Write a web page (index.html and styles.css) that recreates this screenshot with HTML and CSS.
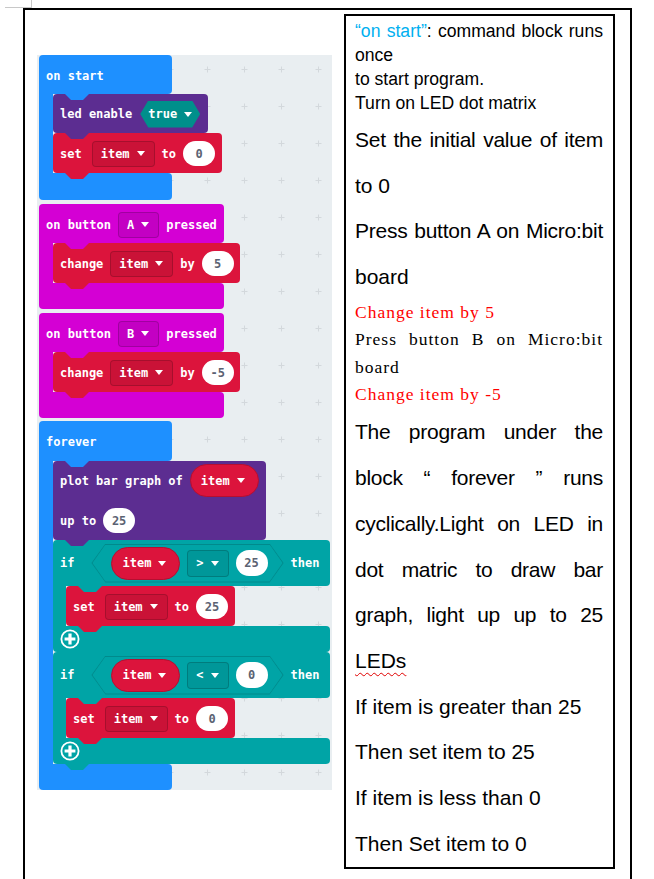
FILE: index.html
```html
<!DOCTYPE html>
<html lang="en">
<head>
<meta charset="utf-8">
<title>micro:bit bar graph</title>
<link rel="stylesheet" href="styles.css">
</head>
<body>
<div class="mark"></div>
<div class="sheet">
  <div class="left">
    <div class="canvas">
      <svg class="grid" width="295" height="735" viewBox="0 0 295 735">
        <defs>
          <pattern id="plus" x="4" y="-4" width="37" height="37" patternUnits="userSpaceOnUse">
            <path d="M15.5 18.5H21.5M18.5 15.5V21.5" stroke="#d3d8dc" stroke-width="1" fill="none"/>
          </pattern>
        </defs>
        <rect width="295" height="735" fill="url(#plus)"/>
      </svg>

      <div class="cblk blue start">
        <div class="head"><span>on start</span></div>
        <div class="body"><div class="arm"></div><div class="stmts">
          <div class="blk purple row led stmt"><span>led enable</span><span class="hex">true<i class="arr"></i></span></div>
          <div class="blk red row set stmt"><span class="lbl-set">set</span><span class="dd">item<i class="arr"></i></span><span>to</span><span class="num">0</span></div>
        </div></div>
        <div class="foot"></div>
      </div>

      <div class="cblk magenta btn">
        <div class="head"><span>on button</span><span class="dd">A<i class="arr"></i></span><span>pressed</span></div>
        <div class="body"><div class="arm"></div><div class="stmts">
          <div class="blk red row change stmt"><span>change</span><span class="dd">item<i class="arr"></i></span><span>by</span><span class="num">5</span></div>
        </div></div>
        <div class="foot"></div>
      </div>

      <div class="cblk magenta btn btn2">
        <div class="head"><span>on button</span><span class="dd">B<i class="arr"></i></span><span>pressed</span></div>
        <div class="body"><div class="arm"></div><div class="stmts">
          <div class="blk red row change stmt"><span>change</span><span class="dd">item<i class="arr"></i></span><span>by</span><span class="num">-5</span></div>
        </div></div>
        <div class="foot"></div>
      </div>

      <div class="cblk blue forever">
        <div class="head"><span>forever</span></div>
        <div class="body"><div class="arm"></div><div class="stmts">
          <div class="blk purple plot stmt">
            <div class="prow r1"><span>plot bar graph of</span><span class="var">item<i class="arr"></i></span></div>
            <div class="prow r2"><span>up to</span><span class="num">25</span></div>
          </div>

          <div class="cblk teal if stmt">
            <div class="head"><span class="kw-if">if</span><span class="cond"><span class="cond-in"><span class="var">item<i class="arr"></i></span><span class="dd op">&gt;<i class="arr"></i></span><span class="num">25</span></span></span><span>then</span></div>
            <div class="body"><div class="arm"></div><div class="stmts">
              <div class="blk red row set stmt"><span class="lbl-set">set</span><span class="dd">item<i class="arr"></i></span><span>to</span><span class="num">25</span></div>
            </div></div>
            <div class="foot"><svg class="add" width="20" height="20" viewBox="0 0 20 20"><circle cx="10" cy="10" r="8.6" fill="none" stroke="#fff" stroke-width="1.8"/><path d="M10 4.6V15.4M4.6 10H15.4" stroke="#fff" stroke-width="3.2"/></svg></div>
          </div>

          <div class="cblk teal if stmt">
            <div class="head"><span class="kw-if">if</span><span class="cond"><span class="cond-in"><span class="var">item<i class="arr"></i></span><span class="dd op">&lt;<i class="arr"></i></span><span class="num">0</span></span></span><span>then</span></div>
            <div class="body"><div class="arm"></div><div class="stmts">
              <div class="blk red row set stmt"><span class="lbl-set">set</span><span class="dd">item<i class="arr"></i></span><span>to</span><span class="num">0</span></div>
            </div></div>
            <div class="foot"><svg class="add" width="20" height="20" viewBox="0 0 20 20"><circle cx="10" cy="10" r="8.6" fill="none" stroke="#fff" stroke-width="1.8"/><path d="M10 4.6V15.4M4.6 10H15.4" stroke="#fff" stroke-width="3.2"/></svg></div>
          </div>
        </div></div>
        <div class="foot"></div>
      </div>
    </div>
  </div>

  <div class="right">
    <div class="s j"><span class="blu">“on start”</span>: command block runs</div>
    <div class="s">once</div>
    <div class="s">to start program.</div>
    <div class="s">Turn on LED dot matrix</div>
    <div class="b j g1">Set the initial value of item</div>
    <div class="b">to 0</div>
    <div class="b j">Press button A on Micro:bit</div>
    <div class="b">board</div>
    <div class="m red-t">Change item by 5</div>
    <div class="m j">Press button B on Micro:bit</div>
    <div class="m">board</div>
    <div class="m red-t">Change item by -5</div>
    <div class="c j g2">The program under the</div>
    <div class="c j">block “ forever ” runs</div>
    <div class="c j">cyclically.Light on LED in</div>
    <div class="c j">dot matric to draw bar</div>
    <div class="c j">graph, light up up to 25</div>
    <div class="c"><span class="spell">LEDs</span></div>
    <div class="c">If item is greater than 25</div>
    <div class="c">Then set item to 25</div>
    <div class="c">If item is less than 0</div>
    <div class="c">Then Set item to 0</div>
  </div>
</div>
</body>
</html>
```

FILE: styles.css
```css
* { box-sizing: border-box; }

body {
  margin: 0;
  background: #fff;
}

.mark {
  width: 27px;
  height: 8px;
  margin-left: 5px;
  border-right: 1px solid #c8c8c8;
  border-bottom: 1px solid #c8c8c8;
}

.sheet {
  display: flex;
  align-items: flex-start;
  margin-left: 23px;
  width: 609px;
  height: 871px;
  border: 2px solid #000;
  border-bottom: 0;
}

.left {
  padding: 45px 0 0 12px;
}

/* ---------- block canvas ---------- */
.canvas {
  position: relative;
  width: 295px;
  height: 735px;
  padding-left: 2px;
  background: #e9eef1;
  font: bold 12px "DejaVu Sans Mono", monospace;
  color: #fff;
  white-space: nowrap;
}

.grid {
  position: absolute;
  left: 0;
  top: 0;
}

.blue { --c: #1e90ff; }
.purple { --c: #5c2d91; }
.red { --c: #dc143c; }
.magenta { --c: #d400d4; }
.teal { --c: #00a4a6; }

.cblk {
  position: relative;
  display: flex;
  flex-direction: column;
  align-items: flex-start;
}

.head {
  display: flex;
  align-items: center;
  gap: 7px;
  padding: 2px 7px 0;
  background: var(--c);
  border-radius: 4px 4px 4px 0;
}

.body { display: flex; }

.arm {
  flex: none;
  width: 14px;
  background: var(--c);
}

.stmts {
  position: relative;
  display: flex;
  flex-direction: column;
  align-items: flex-start;
}

.stmts::before,
.stmt::after {
  content: "";
  position: absolute;
  left: 12px;
  width: 24px;
  height: 6px;
  background: var(--c);
  clip-path: polygon(0 0, 100% 0, calc(100% - 6px) 100%, 6px 100%);
  z-index: 2;
}
.stmts::before { top: 0; }
.stmt::after { top: 100%; }

.foot {
  background: var(--c);
  border-radius: 0 4px 4px 4px;
}

.start { margin-bottom: 4px; }
.start > .head { width: 133px; height: 39px; }
.start > .foot { width: 133px; height: 27px; }

.btn { margin-bottom: 4px; }
.btn2 { margin-bottom: 3px; }
.btn > .head { width: 185px; height: 39px; }
.btn > .foot { width: 185px; height: 26px; }

.forever > .head { width: 133px; height: 40px; }
.forever > .foot { width: 133px; height: 26px; }

.if > .head { width: 277px; height: 46px; padding-top: 0; }
.if > .foot {
  display: flex;
  align-items: center;
  width: 277px;
  height: 26px;
  padding-left: 7px;
}
.if .arm { width: 13px; }

.blk {
  position: relative;
  background: var(--c);
  border-radius: 4px;
}

.row {
  display: flex;
  align-items: center;
  gap: 7px;
  padding: 1px 7px 0;
}

.led { height: 39px; gap: 8px; padding-right: 8px; }
.set { height: 40px; }
.change { height: 40px; padding-right: 6px; }
.lbl-set { margin-right: 3px; }

.plot { padding: 3px 7px 7px; }
.prow { display: flex; align-items: center; gap: 7px; }
.r1 { height: 33px; }
.r2 { height: 25px; margin-top: 11px; }

.arr {
  display: inline-block;
  width: 0;
  height: 0;
  border-left: 4.5px solid transparent;
  border-right: 4.5px solid transparent;
  border-top: 5px solid #fff;
}

.dd {
  display: flex;
  align-items: center;
  gap: 7px;
  height: 26px;
  padding: 0 9px 0 8px;
  background: rgba(0, 0, 0, 0.08);
  border: 1px solid rgba(0, 0, 0, 0.18);
  border-radius: 4px;
}
.op { height: 27px; }

.num {
  display: flex;
  align-items: center;
  justify-content: center;
  width: 32px;
  height: 25px;
  background: #fff;
  border-radius: 13px;
  color: #5b6272;
}

.hex {
  display: flex;
  align-items: center;
  gap: 7px;
  height: 27px;
  padding: 0 8px;
  background: #008f8b;
  clip-path: polygon(8px 0, calc(100% - 8px) 0, 100% 50%, calc(100% - 8px) 100%, 8px 100%, 0 50%);
}

.var {
  display: flex;
  align-items: center;
  gap: 7px;
  height: 33px;
  padding: 0 13px 0 10px;
  background: #dc143c;
  border: 1px solid #b50f31;
  border-radius: 17px;
}

.kw-if { margin-right: 10px; }

.cond {
  display: block;
  height: 39px;
  padding: 1px;
  background: #008a8c;
  clip-path: polygon(14px 0, calc(100% - 14px) 0, 100% 50%, calc(100% - 14px) 100%, 14px 100%, 0 50%);
}

.cond-in {
  display: flex;
  align-items: center;
  gap: 7px;
  height: 37px;
  padding: 0 15px 0 19px;
  background: var(--c);
  clip-path: polygon(13px 0, calc(100% - 13px) 0, 100% 50%, calc(100% - 13px) 100%, 13px 100%, 0 50%);
}
.cond .num { height: 26px; }

.add { display: block; }

/* ---------- right text column ---------- */
.right {
  flex: none;
  width: 271px;
  height: 855px;
  margin: 4px 0 0 12px;
  padding: 3px 10px 0 9px;
  border: 2px solid #000;
  color: #000;
}

.s { font: 17.6px/24px "Liberation Sans", Arial, sans-serif; }
.b { font: 21px/45.5px "Liberation Sans", Arial, sans-serif; }
.c { font: 21px/45.67px "Liberation Sans", Arial, sans-serif; }
.m {
  font: 17.5px/27.3px "Liberation Serif", "Times New Roman", serif;
  letter-spacing: 1px;
}

.j {
  text-align: justify;
  text-align-last: justify;
}
.b.j, .c.j { letter-spacing: -0.25px; }

.g1 { margin-top: 2px; }
.g2 { margin-top: 1.3px; }

.blu { color: #00b0f0; }
.red-t { color: #ff0000; }

.spell {
  text-decoration: underline wavy #e00000;
  text-decoration-thickness: 1px;
  text-underline-offset: 4px;
}
```
